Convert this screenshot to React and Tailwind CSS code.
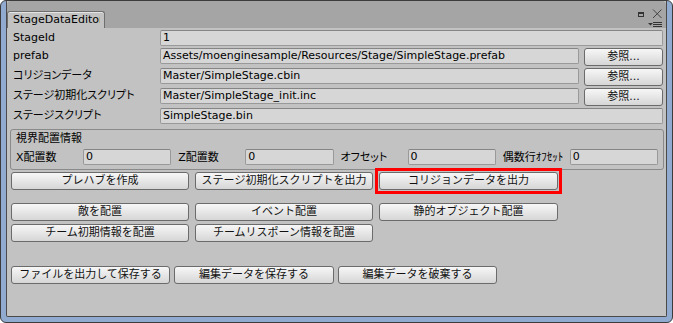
import React from "react";

const font = "font-['DejaVu_Sans','Noto_Sans_CJK_JP',sans-serif]";

function Field({ children, className = "" }) {
  return (
    <div
      className={
        "h-[16px] bg-[#d6d6d6] border border-[#999999] border-t-[#858585] rounded-[2px] pl-[2px] text-[11px] leading-[14px] text-black overflow-hidden whitespace-nowrap " +
        className
      }
    >
      {children}
    </div>
  );
}

function Btn({ children, className = "" }) {
  return (
    <div
      className={
        "h-[18px] flex items-center justify-center rounded-[3px] border border-[#6b6b6b] bg-linear-to-b from-[#f7f7f7] to-[#d6d6d6] text-[11px] leading-[14px] text-[#111111] whitespace-nowrap shrink-0 " +
        className
      }
    >
      {children}
    </div>
  );
}

function Label({ children }) {
  return (
    <div className="w-[142px] shrink-0 text-[11px] leading-[16px] text-black whitespace-nowrap [font-feature-settings:'palt']">
      {children}
    </div>
  );
}

function Row({ label, children, first }) {
  return (
    <div className={(first ? "h-[18px]" : "h-[20px]") + " flex items-start pt-[2px] pl-[6px] pr-[3px] gap-[5px]"}>
      <Label>{label}</Label>
      {children}
    </div>
  );
}

function SmallGroup({ label, value }) {
  return (
    <div className="flex-1 flex items-center min-w-0">
      <div className="w-[67px] shrink-0 text-[11px] leading-[15px] text-black whitespace-nowrap [font-feature-settings:'palt']">
        {label}
      </div>
      <Field className="flex-1 h-[15px] leading-[13px]">{value}</Field>
    </div>
  );
}

export default function App() {
  return (
    <div className={"w-[673px] h-[323px] bg-white " + font}>
      <div className="w-[673px] h-[323px] rounded-[6px] border border-[#3c3c3c] bg-[#90aad0] px-[5px] pb-[5px] flex flex-col overflow-hidden">
        <div className="flex-1 flex flex-col bg-[#c2c2c2] border-l border-r border-b border-[#4a4a4a] rounded-b-[2px]">
          {/* header */}
          <div className="h-[27px] shrink-0 bg-[#a5a5a5] flex items-end rounded-t-[4px]">
            <div className="h-[17px] w-[98px] bg-[#c2c2c2] border-t border-l border-r border-[#6e6e6e] rounded-t-[3px] shadow-[inset_0_1px_0_#e4e4e4] pl-[5px] flex items-center">
              <span className="w-[87px] overflow-hidden whitespace-nowrap text-[11px] leading-[14px] text-black">
                StageDataEditor
              </span>
            </div>
            <div className="ml-auto self-start pt-[8px] pr-[3px]">
              <svg width="26" height="19" viewBox="0 0 26 19" className="block">
                <rect x="1.5" y="3.5" width="5" height="4" fill="none" stroke="#333" strokeWidth="1" />
                <line x1="1" y1="4" x2="7" y2="4" stroke="#333" strokeWidth="2" />
                <line x1="16" y1="0.5" x2="24.5" y2="9" stroke="#444" strokeWidth="1" />
                <line x1="24.5" y1="0.5" x2="16" y2="9" stroke="#444" strokeWidth="1" />
                <polygon points="11,14 16,14 13.5,16.5" fill="#333" />
                <line x1="16" y1="13.5" x2="25" y2="13.5" stroke="#333" strokeWidth="1" />
                <line x1="16" y1="15.5" x2="25" y2="15.5" stroke="#333" strokeWidth="1" />
                <line x1="16" y1="17.5" x2="25" y2="17.5" stroke="#333" strokeWidth="1" />
              </svg>
            </div>
          </div>

          {/* rows */}
          <Row label="StageId" first>
            <Field className="flex-1">1</Field>
          </Row>
          <Row label="prefab">
            <Field className="flex-1">Assets/moenginesample/Resources/Stage/SimpleStage.prefab</Field>
            <Btn className="w-[79px] h-[17px]">参照...</Btn>
          </Row>
          <Row label="コリジョンデータ">
            <Field className="flex-1">Master/SimpleStage.cbin</Field>
            <Btn className="w-[79px] h-[17px]">参照...</Btn>
          </Row>
          <Row label="ステージ初期化スクリプト">
            <Field className="flex-1">Master/SimpleStage_init.inc</Field>
            <Btn className="w-[79px] h-[17px]">参照...</Btn>
          </Row>
          <Row label="ステージスクリプト">
            <Field className="flex-1">SimpleStage.bin</Field>
          </Row>

          {/* group box */}
          <div className="mt-[3px] ml-[3px] mr-[2px] h-[41px] border border-[#8a8a8a] rounded-[3px] pl-[5px] pr-[5px] pt-[1px]">
            <div className="h-[16px] text-[11px] leading-[16px] text-black">視界配置情報</div>
            <div className="mt-[2px] flex gap-[7px]">
              <SmallGroup label="X配置数" value="0" />
              <SmallGroup label="Z配置数" value="0" />
              <SmallGroup label="オフセット" value="0" />
              <SmallGroup label="偶数行ｵﾌｾｯﾄ" value="0" />
            </div>
          </div>

          {/* buttons */}
          <div className="mt-[2px] pl-[4px] flex gap-[6px]">
            <Btn className="w-[178px]">プレハブを作成</Btn>
            <Btn className="w-[178px]">ステージ初期化スクリプトを出力</Btn>
            <div className="-m-[4px] p-[1px] border-[3px] border-[#ff0000] shrink-0">
              <Btn className="w-[179px]">コリジョンデータを出力</Btn>
            </div>
          </div>
          <div className="mt-[13px] pl-[4px] flex gap-[6px]">
            <Btn className="w-[178px]">敵を配置</Btn>
            <Btn className="w-[178px]">イベント配置</Btn>
            <Btn className="w-[179px]">静的オブジェクト配置</Btn>
          </div>
          <div className="mt-[3px] pl-[4px] flex gap-[6px]">
            <Btn className="w-[178px]">チーム初期情報を配置</Btn>
            <Btn className="w-[178px]">チームリスポーン情報を配置</Btn>
          </div>
          <div className="mt-[24px] pl-[4px] flex gap-[4px]">
            <Btn className="w-[159px]">ファイルを出力して保存する</Btn>
            <Btn className="w-[160px]">編集データを保存する</Btn>
            <Btn className="w-[159px]">編集データを破棄する</Btn>
          </div>
        </div>
      </div>
    </div>
  );
}
